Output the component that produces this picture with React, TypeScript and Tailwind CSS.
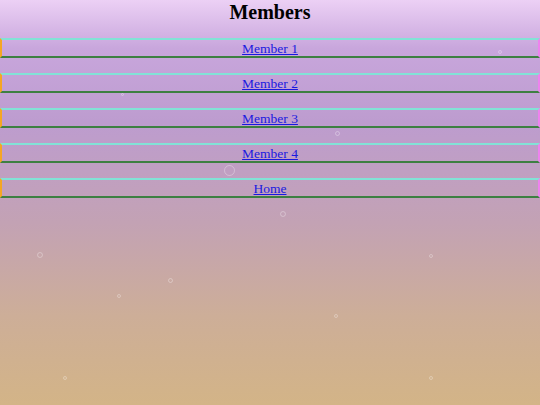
import React from "react";

const LINKS = ["Member 1", "Member 2", "Member 3", "Member 4", "Home"];

// faint bubbles floating over the background
const BUBBLES = [
  { x: 224, y: 165, s: 11 },
  { x: 498, y: 50, s: 4 },
  { x: 335, y: 131, s: 5 },
  { x: 280, y: 211, s: 6 },
  { x: 37, y: 252, s: 6 },
  { x: 168, y: 278, s: 5 },
  { x: 117, y: 294, s: 4 },
  { x: 334, y: 314, s: 4 },
  { x: 429, y: 254, s: 4 },
  { x: 63, y: 376, s: 4 },
  { x: 429, y: 376, s: 4 },
  { x: 121, y: 93, s: 3 },
];

export default function App() {
  return (
    <div
      className="relative w-full min-h-[405px] overflow-hidden bg-[linear-gradient(180deg,#ecd0f5_0%,#c8a6dc_12%,#bd9ccf_30%,#c3a2b4_55%,#cdae98_78%,#d3b487_100%)]"
      style={{ fontFamily: '"Liberation Serif", "Times New Roman", serif' }}
    >
      <h1 className="m-0 text-center text-[20px] font-bold leading-6 text-black">Members</h1>
      <div className="mt-[14px] flex flex-col gap-[15px]">
        {LINKS.map((label) => (
          <div
            key={label}
            className="h-5 border-t-2 border-b-2 border-l-2 border-r-2 border-t-[#82e2d6] border-b-[#3d7f42] border-l-[#f5a623] border-r-[#ee82ee] text-center text-[13.5px] leading-[17px]"
          >
            <a href="#" className="text-[#1a1ae0] underline">
              {label}
            </a>
          </div>
        ))}
      </div>
      {BUBBLES.map((b, i) => (
        <span
          key={i}
          className="absolute rounded-full border border-white/30"
          style={{ left: b.x, top: b.y, width: b.s, height: b.s }}
        />
      ))}
    </div>
  );
}
